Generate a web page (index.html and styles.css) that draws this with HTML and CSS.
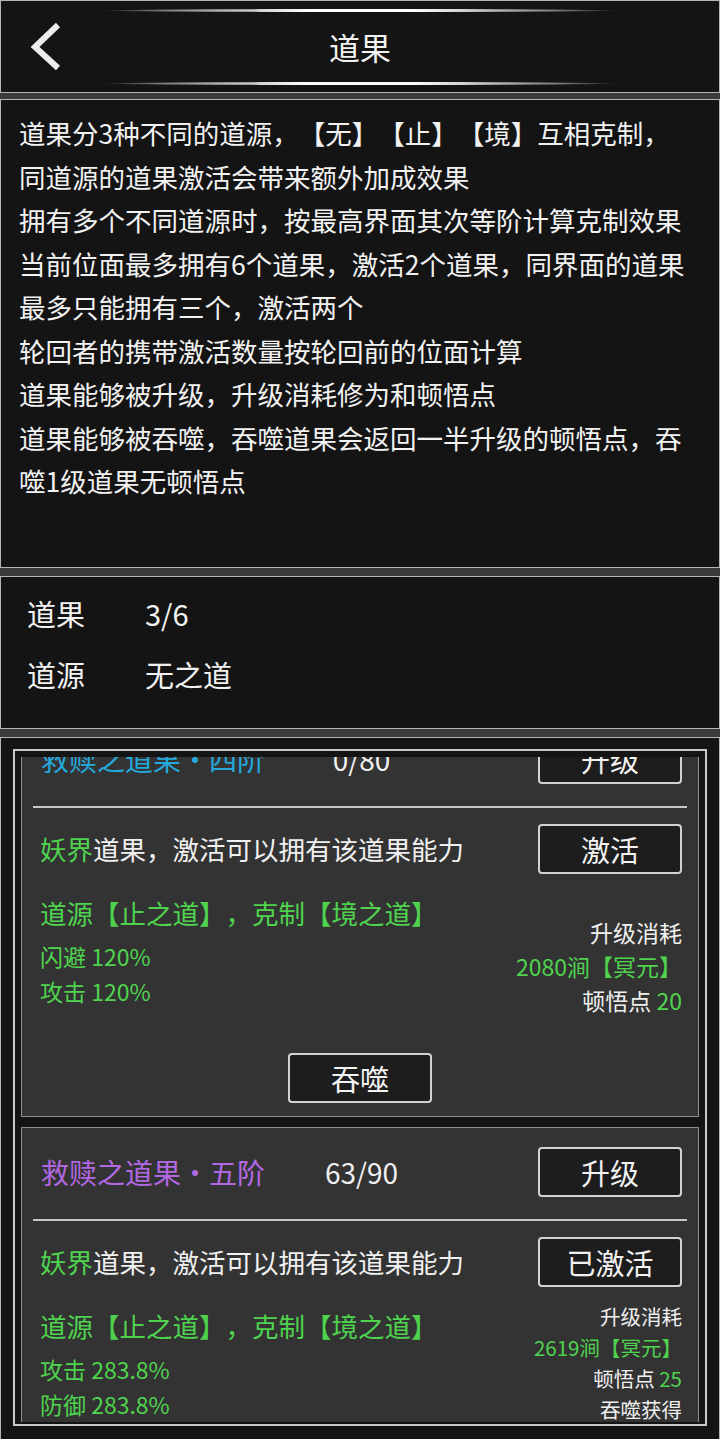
FILE: index.html
```
<!DOCTYPE html>
<html lang="zh-CN">
<head>
<meta charset="utf-8">
<title>道果</title>
<link rel="stylesheet" href="styles.css">
</head>
<body>
<div class="page">
  <header class="topbar">
    <div class="deco"></div>
    <div class="topbar-row">
      <div class="back">
        <svg width="70" height="70" viewBox="1 12 70 70" aria-hidden="true">
          <polyline points="58,25 35,47 58,68" fill="none" stroke="#ececec" stroke-width="6" stroke-linecap="butt" stroke-linejoin="miter"/>
        </svg>
      </div>
      <h1 class="title">道果</h1>
      <div></div>
    </div>
    <div class="deco"></div>
  </header>

  <section class="panel desc">
    <p>道果分3种不同的道源，【无】【止】【境】互相克制，<br>同道源的道果激活会带来额外加成效果<br>拥有多个不同道源时，按最高界面其次等阶计算克制效果<br>当前位面最多拥有6个道果，激活2个道果，同界面的道果<br>最多只能拥有三个，激活两个<br>轮回者的携带激活数量按轮回前的位面计算<br>道果能够被升级，升级消耗修为和顿悟点<br>道果能够被吞噬，吞噬道果会返回一半升级的顿悟点，吞<br>噬1级道果无顿悟点</p>
  </section>

  <section class="panel stats">
    <div class="stat-row"><span>道果</span><span>3/6</span></div>
    <div class="stat-row"><span>道源</span><span>无之道</span></div>
  </section>

  <section class="panel list">
    <div class="frame">
      <div class="viewport">
        <div class="cards">
          <article class="card">
            <div class="card-head">
              <div class="card-title cyan">救赎之道果·四阶</div>
              <div class="card-count">0/80</div>
              <button class="btn btn-end">升级</button>
            </div>
            <div class="divider"></div>
            <div class="card-row">
              <div class="card-desc"><span class="green">妖界</span>道果，激活可以拥有该道果能力</div>
              <button class="btn">激活</button>
            </div>
            <div class="card-body">
              <div class="card-left">
                <div class="source green">道源【止之道】，克制【境之道】</div>
                <div class="attrs">
                  <div class="green">闪避 120%</div>
                  <div class="green">攻击 120%</div>
                </div>
              </div>
              <div class="cost cost-lg">
                <div>升级消耗</div>
                <div class="green">2080涧【冥元】</div>
                <div>顿悟点 <span class="green">20</span></div>
              </div>
            </div>
            <div class="card-foot"><button class="btn">吞噬</button></div>
          </article>

          <article class="card">
            <div class="card-head">
              <div class="card-title purple">救赎之道果·五阶</div>
              <div class="card-count">63/90</div>
              <button class="btn btn-end">升级</button>
            </div>
            <div class="divider"></div>
            <div class="card-row">
              <div class="card-desc"><span class="green">妖界</span>道果，激活可以拥有该道果能力</div>
              <button class="btn">已激活</button>
            </div>
            <div class="card-body">
              <div class="card-left">
                <div class="source green">道源【止之道】，克制【境之道】</div>
                <div class="attrs">
                  <div class="green">攻击 283.8%</div>
                  <div class="green">防御 283.8%</div>
                </div>
              </div>
              <div class="cost cost-sm">
                <div>升级消耗</div>
                <div class="green">2619涧【冥元】</div>
                <div>顿悟点 <span class="green">25</span></div>
                <div>吞噬获得</div>
                <div class="green">1260涧【冥元】</div>
                <div>顿悟点 <span class="green">12</span></div>
              </div>
            </div>
            <div class="card-foot"><button class="btn">吞噬</button></div>
          </article>
        </div>
      </div>
    </div>
  </section>
</div>
</body>
</html>
```

FILE: styles.css
```
* {
  box-sizing: border-box;
}

body {
  margin: 0;
  background: #3b3b3b;
  font-family: "Noto Sans CJK SC", "Noto Sans", sans-serif;
  color: #f0f0f0;
  text-spacing-trim: space-all;
}

.page {
  width: 720px;
  height: 1439px;
  overflow: hidden;
}

.topbar,
.panel {
  background: #141414;
  border: 1px solid #b5b5b5;
}

/* header */
.topbar {
  height: 93px;
  margin-bottom: 6px;
  padding: 8px 0 7px;
  display: flex;
  flex-direction: column;
}

.deco {
  width: 520px;
  height: 3px;
  margin: 0 auto;
  border-radius: 50%;
  background: linear-gradient(90deg,
    rgba(160, 160, 160, 0) 0%,
    rgba(170, 170, 170, 0.7) 12%,
    #ffffff 40%,
    #ffffff 60%,
    rgba(170, 170, 170, 0.7) 88%,
    rgba(160, 160, 160, 0) 100%);
}

.topbar-row {
  height: 70px;
  display: grid;
  grid-template-columns: 1fr auto 1fr;
  align-items: center;
}

.back svg {
  display: block;
}

.title {
  margin: 0;
  font-size: 31px;
  font-weight: 400;
  line-height: 70px;
  color: #f2f2f2;
}

/* description */
.desc {
  height: 469px;
  margin-bottom: 8px;
  padding: 11px 4px 0 18px;
}

.desc p {
  margin: 0;
  font-size: 26.5px;
  line-height: 43.5px;
  white-space: nowrap;
  color: #f2f2f2;
}

/* stats */
.stats {
  height: 153px;
  margin-bottom: 8px;
  padding: 6px 0 0 26px;
}

.stat-row {
  display: grid;
  grid-template-columns: 118px auto;
  font-size: 29px;
  line-height: 61px;
  color: #f2f2f2;
}

/* list */
.list {
  height: 703px;
  padding: 11px 12px 0;
}

.frame {
  height: 677px;
  border: 2px solid #c9c9c9;
  padding: 6px 6px 2px;
  background: #141414;
}

.viewport {
  height: 100%;
  overflow: hidden;
}

.cards {
  margin-top: -43px;
  display: flex;
  flex-direction: column;
  gap: 10px;
}

.card {
  border: 1px solid #8e8e8e;
  background: #333333;
  padding-top: 19px;
  padding-bottom: 13px;
}

.card-head {
  height: 50px;
  padding: 0 16px 0 19px;
  display: grid;
  grid-template-columns: 1fr auto 1fr;
  align-items: center;
}

.card-title {
  font-size: 28px;
  line-height: 50px;
  white-space: nowrap;
}

.card-count {
  font-size: 28px;
  line-height: 50px;
  color: #f0f0f0;
}

.btn-end {
  justify-self: end;
}

.divider {
  height: 2px;
  margin: 22px 11px 0;
  background: #c8c8c8;
}

.card-row {
  margin-top: 16px;
  height: 50px;
  padding: 0 16px 0 18px;
  display: flex;
  align-items: center;
  justify-content: space-between;
}

.card-desc {
  font-size: 26.5px;
  line-height: 36px;
  color: #f0f0f0;
  white-space: nowrap;
}

.card-body {
  padding: 0 16px 0 18px;
  display: flex;
  justify-content: space-between;
  align-items: flex-start;
}

.source {
  margin-top: 20px;
  font-size: 26.5px;
  line-height: 38px;
  white-space: nowrap;
}

.attrs {
  margin-top: 7px;
  font-size: 23px;
  line-height: 34.5px;
}

.cost {
  text-align: right;
  white-space: nowrap;
  color: #f0f0f0;
}

.cost-lg {
  padding-top: 41px;
  font-size: 23px;
  line-height: 34px;
}

.cost-sm {
  padding-top: 13.5px;
  font-size: 20.5px;
  line-height: 31px;
}

.card-foot {
  margin-top: 36px;
  text-align: center;
}

.btn {
  width: 144px;
  height: 50px;
  padding: 0;
  border: 2px solid #d2d2d2;
  border-radius: 4px;
  background: #1d1d1d;
  color: #f2f2f2;
  font-family: inherit;
  font-size: 29px;
  line-height: 1;
}

.green {
  color: #4fd34f;
}

.cyan {
  color: #25a8dc;
}

.purple {
  color: #b368e3;
}
```
